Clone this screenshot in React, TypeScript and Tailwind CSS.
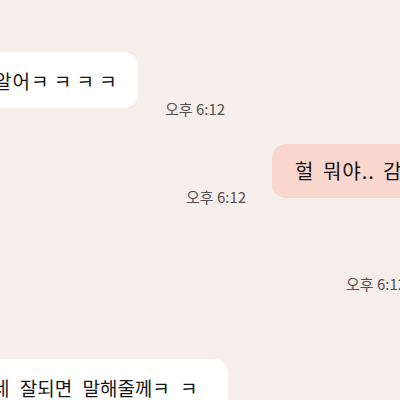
export default function App() {
  const time = "오후 6:12";

  return (
    <main className="h-[400px] w-[400px] overflow-hidden bg-[#f6eeeb] pt-[52px] font-['Noto_Sans_CJK_KR','Noto_Sans',sans-serif] text-[#161616]">
      {/* 상대 메시지 */}
      <div className="flex items-start">
        <div className="-ml-[24px] flex h-[56px] w-[162px] shrink-0 items-center whitespace-nowrap rounded-[14px] bg-white pl-[18px] text-[19px] leading-none tracking-[1px] [word-spacing:-1px]">
          알어ㅋ ㅋ ㅋ ㅋ
        </div>
        <div className="ml-[27px] mt-[48px] whitespace-nowrap text-[15px] leading-[18px] text-[#555151]">
          {time}
        </div>
      </div>

      {/* 내 메시지 */}
      <div className="mt-[26px] flex items-start pl-[186px]">
        <div className="mt-[44px] w-[86px] shrink-0 whitespace-nowrap text-[15px] leading-[18px] text-[#555151]">
          {time}
        </div>
        <div className="flex h-[54px] w-[160px] shrink-0 items-center whitespace-nowrap rounded-[14px] bg-[#f9d6ce] pl-[23px] text-[20px] leading-none tracking-[1px] [word-spacing:3px]">
          헐 뭐야.. 감동
        </div>
      </div>

      <div className="mt-[69px] whitespace-nowrap pl-[346px] text-[15px] leading-[18px] text-[#555151]">
        {time}
      </div>

      {/* 상대 메시지 */}
      <div className="mt-[66px] flex">
        <div className="-ml-[32px] flex h-[56px] w-[260px] shrink-0 items-center whitespace-nowrap rounded-[14px] bg-white pl-[24px] text-[19px] leading-none [word-spacing:6px]">
          네 잘되면 말해줄께ㅋ ㅋ
        </div>
      </div>
    </main>
  );
}
